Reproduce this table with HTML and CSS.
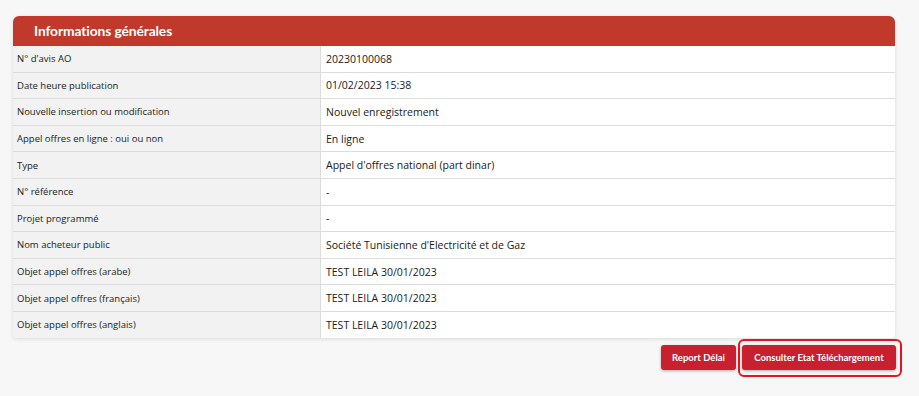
FILE: index.html
```html
<!DOCTYPE html>
<html lang="fr">
<head>
<meta charset="utf-8">
<link rel="stylesheet" href="styles.css">
</head>
<body>
<div class="page">
  <div class="card">
    <div class="card-header">Informations générales</div>
    <table class="info">
      <tr><td class="lbl">N° d'avis AO</td><td class="val">20230100068</td></tr>
      <tr><td class="lbl">Date heure publication</td><td class="val">01/02/2023 15:38</td></tr>
      <tr><td class="lbl">Nouvelle insertion ou modification</td><td class="val">Nouvel enregistrement</td></tr>
      <tr><td class="lbl">Appel offres en ligne : oui ou non</td><td class="val">En ligne</td></tr>
      <tr><td class="lbl">Type</td><td class="val">Appel d'offres national (part dinar)</td></tr>
      <tr><td class="lbl">N° référence</td><td class="val">-</td></tr>
      <tr><td class="lbl">Projet programmé</td><td class="val">-</td></tr>
      <tr><td class="lbl">Nom acheteur public</td><td class="val">Société Tunisienne d'Electricité et de Gaz</td></tr>
      <tr><td class="lbl">Objet appel offres (arabe)</td><td class="val">TEST LEILA 30/01/2023</td></tr>
      <tr><td class="lbl">Objet appel offres (français)</td><td class="val">TEST LEILA 30/01/2023</td></tr>
      <tr><td class="lbl">Objet appel offres (anglais)</td><td class="val">TEST LEILA 30/01/2023</td></tr>
    </table>
  </div>
  <div class="actions">
    <button class="btn">Report Délai</button>
    <span class="highlight"><button class="btn">Consulter Etat Téléchargement</button></span>
  </div>
</div>
</body>
</html>
```

FILE: styles.css
```css
html, body {
  margin: 0;
  padding: 0;
  background: #f7f7f7;
}
body {
  font-family: "Open Sans", "Noto Sans", sans-serif;
  color: #222;
}
.page {
  width: 889px;
  padding: 16px 0 0 13px;
}
.card {
  width: 882px;
  background: #fff;
  border-radius: 6px 6px 4px 4px;
  box-shadow: 0 1px 4px rgba(0,0,0,0.12);
  overflow: hidden;
}
.card-header {
  height: 30px;
  line-height: 30px;
  background: #c0392b;
  color: #fff;
  font-family: "Lato", sans-serif;
  font-weight: 700;
  font-size: 13.8px;
  letter-spacing: -0.1px;
  padding-left: 21px;
}
.info {
  width: 100%;
  border-collapse: collapse;
  table-layout: fixed;
}
.info td {
  height: 25.6px;
  padding: 0 0 0 5px;
  border-top: 1px solid #dcdcdc;
  vertical-align: middle;
}
.info tr:first-child td {
  border-top: none;
}
.info td.lbl {
  width: 303px;
  background: #f1f2f1;
  font-size: 9.5px;
  color: #1c1c1c;
  border-right: 1px solid #dcdcdc;
  padding-left: 4px;
}
.info td.val {
  font-size: 10.5px;
  color: #1a1a1a;
  padding-left: 5px;
}
.actions {
  display: flex;
  justify-content: flex-end;
  align-items: center;
  gap: 2px;
  margin-top: 1px;
}
.btn {
  background: #c8202e;
  color: #fff;
  border: none;
  border-radius: 3px;
  font-family: "Lato", sans-serif;
  font-weight: 700;
  font-size: 9.5px;
  height: 25px;
  padding: 0 11px;
  box-shadow: 0 1px 3px rgba(0,0,0,0.3);
  cursor: pointer;
}
.highlight {
  display: inline-flex;
  border: 2px solid #e8141a;
  border-radius: 6px;
  padding: 4px 4px 5px 2px;
}
.highlight .btn {
  width: 154px;
  padding: 0;
}
```
